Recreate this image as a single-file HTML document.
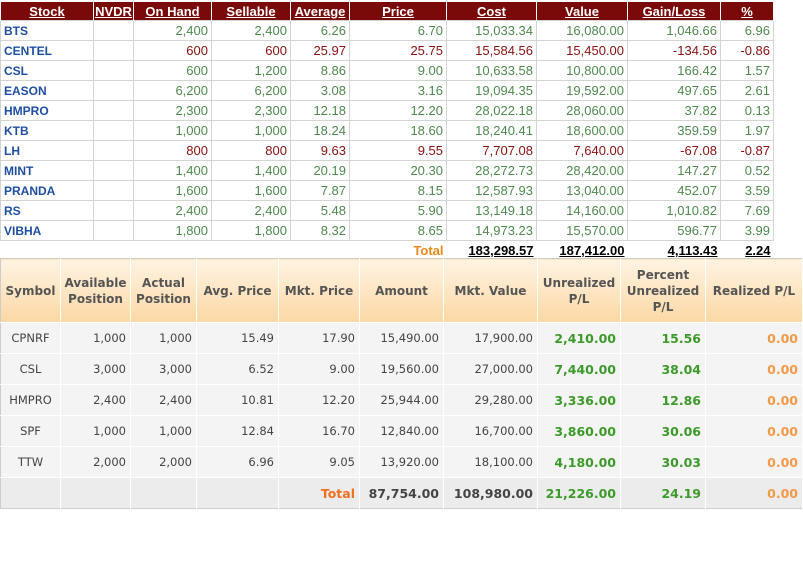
<!DOCTYPE html>
<html><head><style>
body{margin:0;background:#fff;width:803px;height:585px;overflow:hidden;position:relative}
table{border-collapse:collapse;table-layout:fixed;position:absolute}
#t1{left:0;top:2px;font-family:"Liberation Sans",Arial,sans-serif;font-size:13px}
#t1 th{background:#7a0a0a;color:#fff;font-weight:bold;text-decoration:underline;height:18px;padding:0;border-left:1px solid #fff;border-right:1px solid #fff}
#t1 td{height:19px;padding:0 3px;border:1px solid #d4d4d4;text-align:right;color:#4f8a4f}
#t1 td.s{text-align:left;color:#1e4fa3;font-weight:bold;font-size:12px}
#t1 tr.r td{color:#8b1010}
#t1 tr.r td.s{color:#1e4fa3}
#t1 tr.tot td{border:none;color:#000;font-weight:bold;text-decoration:underline}
#t1 tr.tot td.tl{color:#e88a1a;text-decoration:none}
#t2{left:0;top:258px;width:802px;font-family:"DejaVu Sans",Tahoma,sans-serif;font-size:11.5px;color:#444;border:1px solid #ccc}
#t2 th{height:63px;padding:0;background:linear-gradient(#fff3e2,#fcd8a4);border-right:1px solid #fff;font-weight:bold;color:#555;line-height:16px;font-size:12px}
#t2 td{height:30px;padding:0 4px;background:#f4f4f4;border-right:1px solid #fff;border-top:1px solid #fff;text-align:right}
#t2 td.c{text-align:center}
#t2 td.g{color:#3c9a2a;font-weight:bold;font-size:12.5px}
#t2 td.o{color:#f29a48;font-weight:bold;font-size:12.5px}
#t2 tr.tot td{background:#ececec;font-weight:bold;font-size:12.5px}
#t2 td.tl{color:#f07020}
</style></head><body>
<table id="t1">
<colgroup><col style="width:93px"><col style="width:40px"><col style="width:78px"><col style="width:79px"><col style="width:59px"><col style="width:97px"><col style="width:90px"><col style="width:91px"><col style="width:93px"><col style="width:53px"></colgroup>
<tr><th>Stock</th><th>NVDR</th><th>On Hand</th><th>Sellable</th><th>Average</th><th>Price</th><th>Cost</th><th>Value</th><th>Gain/Loss</th><th>%</th></tr>
<tr><td class="s">BTS</td><td></td><td>2,400</td><td>2,400</td><td>6.26</td><td>6.70</td><td>15,033.34</td><td>16,080.00</td><td>1,046.66</td><td>6.96</td></tr>
<tr class="r"><td class="s">CENTEL</td><td></td><td>600</td><td>600</td><td>25.97</td><td>25.75</td><td>15,584.56</td><td>15,450.00</td><td>-134.56</td><td>-0.86</td></tr>
<tr><td class="s">CSL</td><td></td><td>600</td><td>1,200</td><td>8.86</td><td>9.00</td><td>10,633.58</td><td>10,800.00</td><td>166.42</td><td>1.57</td></tr>
<tr><td class="s">EASON</td><td></td><td>6,200</td><td>6,200</td><td>3.08</td><td>3.16</td><td>19,094.35</td><td>19,592.00</td><td>497.65</td><td>2.61</td></tr>
<tr><td class="s">HMPRO</td><td></td><td>2,300</td><td>2,300</td><td>12.18</td><td>12.20</td><td>28,022.18</td><td>28,060.00</td><td>37.82</td><td>0.13</td></tr>
<tr><td class="s">KTB</td><td></td><td>1,000</td><td>1,000</td><td>18.24</td><td>18.60</td><td>18,240.41</td><td>18,600.00</td><td>359.59</td><td>1.97</td></tr>
<tr class="r"><td class="s">LH</td><td></td><td>800</td><td>800</td><td>9.63</td><td>9.55</td><td>7,707.08</td><td>7,640.00</td><td>-67.08</td><td>-0.87</td></tr>
<tr><td class="s">MINT</td><td></td><td>1,400</td><td>1,400</td><td>20.19</td><td>20.30</td><td>28,272.73</td><td>28,420.00</td><td>147.27</td><td>0.52</td></tr>
<tr><td class="s">PRANDA</td><td></td><td>1,600</td><td>1,600</td><td>7.87</td><td>8.15</td><td>12,587.93</td><td>13,040.00</td><td>452.07</td><td>3.59</td></tr>
<tr><td class="s">RS</td><td></td><td>2,400</td><td>2,400</td><td>5.48</td><td>5.90</td><td>13,149.18</td><td>14,160.00</td><td>1,010.82</td><td>7.69</td></tr>
<tr><td class="s">VIBHA</td><td></td><td>1,800</td><td>1,800</td><td>8.32</td><td>8.65</td><td>14,973.23</td><td>15,570.00</td><td>596.77</td><td>3.99</td></tr>
<tr class="tot"><td></td><td></td><td></td><td></td><td></td><td class="tl">Total</td><td>183,298.57</td><td>187,412.00</td><td>4,113.43</td><td>2.24</td></tr>
</table>
<table id="t2">
<colgroup><col style="width:60px"><col style="width:70px"><col style="width:66px"><col style="width:82px"><col style="width:81px"><col style="width:84px"><col style="width:94px"><col style="width:83px"><col style="width:85px"><col style="width:97px"></colgroup>
<tr><th>Symbol</th><th>Available<br>Position</th><th>Actual<br>Position</th><th>Avg. Price</th><th>Mkt. Price</th><th>Amount</th><th>Mkt. Value</th><th>Unrealized<br>P/L</th><th>Percent<br>Unrealized<br>P/L</th><th>Realized P/L</th></tr>
<tr><td class="c">CPNRF</td><td>1,000</td><td>1,000</td><td>15.49</td><td>17.90</td><td>15,490.00</td><td>17,900.00</td><td class="g">2,410.00</td><td class="g">15.56</td><td class="o">0.00</td></tr>
<tr><td class="c">CSL</td><td>3,000</td><td>3,000</td><td>6.52</td><td>9.00</td><td>19,560.00</td><td>27,000.00</td><td class="g">7,440.00</td><td class="g">38.04</td><td class="o">0.00</td></tr>
<tr><td class="c">HMPRO</td><td>2,400</td><td>2,400</td><td>10.81</td><td>12.20</td><td>25,944.00</td><td>29,280.00</td><td class="g">3,336.00</td><td class="g">12.86</td><td class="o">0.00</td></tr>
<tr><td class="c">SPF</td><td>1,000</td><td>1,000</td><td>12.84</td><td>16.70</td><td>12,840.00</td><td>16,700.00</td><td class="g">3,860.00</td><td class="g">30.06</td><td class="o">0.00</td></tr>
<tr><td class="c">TTW</td><td>2,000</td><td>2,000</td><td>6.96</td><td>9.05</td><td>13,920.00</td><td>18,100.00</td><td class="g">4,180.00</td><td class="g">30.03</td><td class="o">0.00</td></tr>
<tr class="tot"><td></td><td></td><td></td><td></td><td class="tl">Total</td><td>87,754.00</td><td>108,980.00</td><td class="g">21,226.00</td><td class="g">24.19</td><td class="o">0.00</td></tr>
</table>
</body></html>
